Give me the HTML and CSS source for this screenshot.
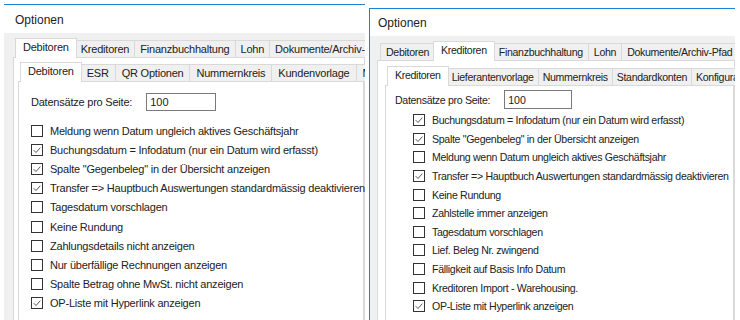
FILE: index.html
```html
<!DOCTYPE html>
<html lang="de">
<head>
    <meta charset="UTF-8">
    <meta name="viewport" content="width=device-width, initial-scale=1.0">
    <title>Optionen</title>
    <link rel="stylesheet" href="styles.css">
</head>
<body>
    <!-- Dialog 1: Debitoren -->
    <div class="window win-left">
        <div class="titlebar">Optionen</div>
        <div class="window-body">
            <div class="tabs outer-tabs">
                <span class="tab active">Debitoren</span>
                <span class="tab">Kreditoren</span>
                <span class="tab">Finanzbuchhaltung</span>
                <span class="tab">Lohn</span>
                <span class="tab">Dokumente/Archiv-Pfad</span>
            </div>
            <div class="page outer-page">
                <div class="tabs inner-tabs">
                    <span class="tab active">Debitoren</span>
                    <span class="tab">ESR</span>
                    <span class="tab">QR Optionen</span>
                    <span class="tab">Nummernkreis</span>
                    <span class="tab">Kundenvorlage</span>
                    <span class="tab">Mahnwesen</span>
                </div>
                <div class="page inner-page">
                    <div class="field-row">
                        <label>Datensätze pro Seite:</label>
                        <input type="text" class="num-input" value="100">
                    </div>
                    <ul class="checklist">
                        <li><span class="check"></span>Meldung wenn Datum ungleich aktives Geschäftsjahr</li>
                        <li><span class="check"><svg viewBox="0 0 12 12"><path d="M2 6.2 L4.8 9 L10 3.2"/></svg></span>Buchungsdatum = Infodatum (nur ein Datum wird erfasst)</li>
                        <li><span class="check"><svg viewBox="0 0 12 12"><path d="M2 6.2 L4.8 9 L10 3.2"/></svg></span>Spalte "Gegenbeleg" in der Übersicht anzeigen</li>
                        <li><span class="check"><svg viewBox="0 0 12 12"><path d="M2 6.2 L4.8 9 L10 3.2"/></svg></span>Transfer =&gt; Hauptbuch Auswertungen standardmässig deaktivieren</li>
                        <li><span class="check"></span>Tagesdatum vorschlagen</li>
                        <li><span class="check"></span>Keine Rundung</li>
                        <li><span class="check"></span>Zahlungsdetails nicht anzeigen</li>
                        <li><span class="check"></span>Nur überfällige Rechnungen anzeigen</li>
                        <li><span class="check"></span>Spalte Betrag ohne MwSt. nicht anzeigen</li>
                        <li><span class="check"><svg viewBox="0 0 12 12"><path d="M2 6.2 L4.8 9 L10 3.2"/></svg></span>OP-Liste mit Hyperlink anzeigen</li>
                    </ul>
                </div>
            </div>
        </div>
    </div>

    <!-- Dialog 2: Kreditoren -->
    <div class="window win-right">
        <div class="titlebar">Optionen</div>
        <div class="window-body">
            <div class="tabs outer-tabs">
                <span class="tab">Debitoren</span>
                <span class="tab active">Kreditoren</span>
                <span class="tab">Finanzbuchhaltung</span>
                <span class="tab">Lohn</span>
                <span class="tab">Dokumente/Archiv-Pfad</span>
            </div>
            <div class="page outer-page">
                <div class="tabs inner-tabs">
                    <span class="tab active">Kreditoren</span>
                    <span class="tab">Lieferantenvorlage</span>
                    <span class="tab">Nummernkreis</span>
                    <span class="tab">Standardkonten</span>
                    <span class="tab">Konfiguration</span>
                </div>
                <div class="page inner-page">
                    <div class="field-row">
                        <label>Datensätze pro Seite:</label>
                        <input type="text" class="num-input" value="100">
                    </div>
                    <ul class="checklist">
                        <li><span class="check"><svg viewBox="0 0 12 12"><path d="M2 6.2 L4.8 9 L10 3.2"/></svg></span>Buchungsdatum = Infodatum (nur ein Datum wird erfasst)</li>
                        <li><span class="check"><svg viewBox="0 0 12 12"><path d="M2 6.2 L4.8 9 L10 3.2"/></svg></span>Spalte "Gegenbeleg" in der Übersicht anzeigen</li>
                        <li><span class="check"></span>Meldung wenn Datum ungleich aktives Geschäftsjahr</li>
                        <li><span class="check"><svg viewBox="0 0 12 12"><path d="M2 6.2 L4.8 9 L10 3.2"/></svg></span>Transfer =&gt; Hauptbuch Auswertungen standardmässig deaktivieren</li>
                        <li><span class="check"></span>Keine Rundung</li>
                        <li><span class="check"></span>Zahlstelle immer anzeigen</li>
                        <li><span class="check"></span>Tagesdatum vorschlagen</li>
                        <li><span class="check"></span>Lief. Beleg Nr. zwingend</li>
                        <li><span class="check"></span>Fälligkeit auf Basis Info Datum</li>
                        <li><span class="check"></span>Kreditoren Import - Warehousing.</li>
                        <li><span class="check"><svg viewBox="0 0 12 12"><path d="M2 6.2 L4.8 9 L10 3.2"/></svg></span>OP-Liste mit Hyperlink anzeigen</li>
                    </ul>
                </div>
            </div>
        </div>
    </div>
</body>
</html>
```

FILE: styles.css
```css
body {
  margin: 0;
  height: 320px;
  overflow: hidden;
  position: relative;
  background: #ffffff;
  font-family: "Liberation Sans", Arial, sans-serif;
  font-size: 11px;
  color: #222;
}

/* windows sit on the desktop, right one on top */
.window {
  position: absolute;
  background: #f0f0f0;
  border-top: 1px solid #1883d7;
  overflow: hidden;
}
.win-left {
  left: 4px;
  top: 4px;
  width: 361px;
  height: 316px;
  z-index: 1;
  letter-spacing: -0.22px;
}
.win-right {
  left: 369px;
  top: 8px;
  width: 365px;
  height: 312px;
  border-left: 1px solid #1883d7;
  z-index: 2;
  font-size: 10.6px;
  letter-spacing: -0.32px;
}

.titlebar {
  background: #ffffff;
  font-size: 12px;
  letter-spacing: 0;
  color: #222;
}
.win-left .titlebar {
  height: 28px;
  line-height: 30px;
  padding-left: 11px;
}
.win-right .titlebar {
  height: 27px;
  line-height: 28px;
  padding-left: 8px;
}

.win-left .window-body {
  padding: 5px 0 0 9px;
}
.win-right .window-body {
  padding: 5px 0 0 7px;
}

/* tab strips */
.tabs {
  display: flex;
  align-items: flex-end;
  white-space: nowrap;
  padding-left: 4px;
}
.tab {
  flex: none;
  height: 16px;
  line-height: 17px;
  padding: 0 5px;
  border: 1px solid #d9d9d9;
  border-bottom: none;
  background: #f0f0f0;
  margin-left: -1px;
}
.tab.active {
  position: relative;
  z-index: 1;
  height: 19px;
  line-height: 16px;
  margin: 0 -2px -1px -2px;
  padding: 0 7px;
  background: #ffffff;
}
.tab.active + .tab {
  margin-left: 0;
}
.win-left .inner-tabs .tab {
  padding: 0 6px;
}
.win-left .inner-tabs .tab.active {
  padding: 0 7px;
}
.win-right .inner-tabs .tab {
  padding: 0 4px;
}
.win-right .inner-tabs .tab.active {
  padding: 0 7px;
}

.page {
  background: #ffffff;
  border: 1px solid #d9d9d9;
}
.outer-page {
  height: 400px;
}
.win-left .outer-page {
  padding: 4px 0 0 4px;
}
.win-right .outer-page {
  padding: 5px 0 0 7px;
}
.inner-page {
  height: 400px;
}
.win-left .inner-page {
  padding: 11px 0 0 12px;
}
.win-right .inner-page {
  padding: 4px 0 0 9px;
}

.field-row {
  display: flex;
  align-items: center;
}
.num-input {
  box-sizing: border-box;
  font: inherit;
  color: #222;
  border: 1px solid #7a7a7a;
  padding: 0 3px;
  outline: none;
}
.win-left .num-input {
  margin-left: 14px;
  width: 70px;
  height: 18px;
}
.win-right .num-input {
  margin-left: 14px;
  width: 68px;
  height: 19px;
}

.checklist {
  list-style: none;
  margin: 0;
  padding: 0;
}
.win-left .checklist {
  margin-top: 10px;
}
.win-right .checklist {
  margin-top: 2px;
  padding-left: 18px;
}
.checklist li {
  display: flex;
  align-items: center;
  white-space: nowrap;
}
.win-left .checklist li {
  height: 19.2px;
}
.win-right .checklist li {
  height: 18.6px;
}
.check {
  flex: none;
  box-sizing: border-box;
  width: 12px;
  height: 12px;
  border: 1px solid #333;
  background: #fff;
  margin-right: 7px;
  display: flex;
}
.check svg {
  width: 10px;
  height: 10px;
  fill: none;
  stroke: #333;
  stroke-width: 1;
}
```
